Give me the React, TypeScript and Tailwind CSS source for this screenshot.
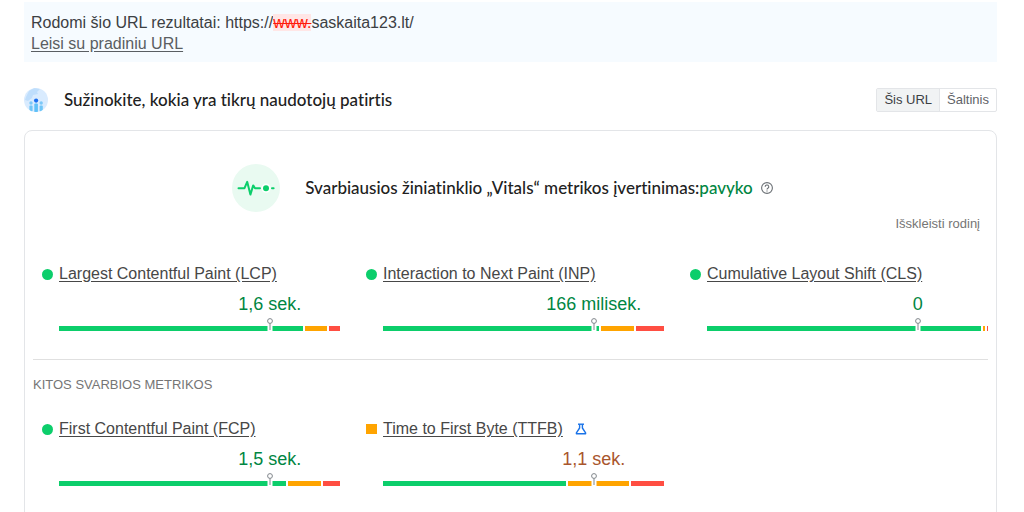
import clsx from "clsx";

type Rating = "good" | "average";

interface Metric {
  name: string;
  value: string;
  rating: Rating;
  // good / needs improvement / poor, in percent
  split: [number, number, number];
  experimental?: boolean;
}

const CORE_METRICS: Metric[] = [
  { name: "Largest Contentful Paint (LCP)", value: "1,6 sek.", rating: "good", split: [88, 8, 4] },
  { name: "Interaction to Next Paint (INP)", value: "166 milisek.", rating: "good", split: [78, 12, 10] },
  { name: "Cumulative Layout Shift (CLS)", value: "0", rating: "good", split: [99, 0.5, 0.5] },
];

const OTHER_METRICS: Metric[] = [
  { name: "First Contentful Paint (FCP)", value: "1,5 sek.", rating: "good", split: [82, 12, 6] },
  {
    name: "Time to First Byte (TTFB)",
    value: "1,1 sek.",
    rating: "average",
    split: [66, 22, 12],
    experimental: true,
  },
];

const SEGMENT_COLORS = ["bg-[#0cce6b]", "bg-[#ffa400]", "bg-[#ff4e42]"];

function UsersIcon() {
  return (
    <svg className="h-6 w-6 shrink-0" viewBox="0 0 24 24" aria-hidden="true">
      <defs>
        <clipPath id="users-clip">
          <circle cx="12" cy="12" r="12" />
        </clipPath>
      </defs>
      <g clipPath="url(#users-clip)">
        <rect width="24" height="24" fill="#d9ebfe" />
        <path d="M2 9 L5 3 L10 0 L16 1 L13 4 L14 6 L9 7 L8 10 L4 13 L1 12 Z" fill="#bfdefc" />
        <circle cx="7" cy="15" r="1.7" fill="#7cc8f8" />
        <rect x="5.4" y="17.6" width="3.2" height="6" rx="1" fill="#6fc6f8" />
        <circle cx="17.2" cy="15" r="1.7" fill="#7cc8f8" />
        <rect x="15.6" y="17.6" width="3.2" height="6" rx="1" fill="#6fc6f8" />
        <rect x="10.3" y="15.6" width="3.6" height="9" rx="1" fill="#5fc0f8" />
        <circle cx="12.1" cy="12.6" r="2.1" fill="#1a6ff0" />
      </g>
    </svg>
  );
}

function PulseIcon() {
  return (
    <svg className="h-12 w-12 shrink-0" viewBox="0 0 48 48" aria-hidden="true">
      <circle cx="24" cy="24" r="24" fill="#e9faf1" />
      <path
        d="M6.5 24.2 H12.5 L15.2 17.8 L18.4 30.6 L21.2 21.4 L23 24.2 H28"
        fill="none"
        stroke="#0cce6b"
        strokeWidth="2"
        strokeLinecap="round"
        strokeLinejoin="round"
      />
      <circle cx="34" cy="24.2" r="4.6" fill="#fff" />
      <circle cx="34" cy="24.2" r="3" fill="#0cce6b" />
      <path d="M40 24.2 H41.6" stroke="#0cce6b" strokeWidth="2" strokeLinecap="round" />
    </svg>
  );
}

function HelpIcon() {
  return (
    <svg className="h-3 w-3" viewBox="0 0 12 12" fill="none" stroke="#6b7075" aria-hidden="true">
      <circle cx="6" cy="6" r="5.4" strokeWidth="1.1" />
      <path d="M4.2 4.9 A1.8 1.7 0 1 1 6.9 6.2 C6.2 6.6 6 6.9 6 7.5" strokeWidth="1.1" />
      <path d="M6 8.4 V9.5" strokeWidth="1.2" />
    </svg>
  );
}

function FlaskIcon() {
  return (
    <svg
      className="h-3 w-3 shrink-0"
      viewBox="0 0 12 12"
      fill="none"
      stroke="#1a73e8"
      strokeWidth="1.4"
      aria-hidden="true"
    >
      <path d="M3 1.2 H9" />
      <path d="M4.6 1.2 V5 L1.4 9.8 V10.8 H10.6 V9.8 L7.4 5 V1.2" strokeLinejoin="round" />
    </svg>
  );
}

function Distribution({ split }: { split: Metric["split"] }) {
  return (
    <div className="relative mt-2.5">
      <div className="flex h-[5px] gap-0.5">
        {split.map((share, i) => (
          <div key={i} className={SEGMENT_COLORS[i]} style={{ flex: `${share} 1 0` }} />
        ))}
      </div>
      {/* 75th percentile marker */}
      <div className="absolute bottom-0 left-3/4 flex h-[5px] w-[5px] -translate-x-1/2 items-end justify-center bg-white">
        <svg className="h-[13px] w-[7px] shrink-0" viewBox="0 0 7 13" fill="none" stroke="#80868b">
          <circle cx="3.5" cy="3" r="2.4" />
          <path d="M3.5 5.4 V12" />
        </svg>
      </div>
    </div>
  );
}

function MetricItem({ metric }: { metric: Metric }) {
  const good = metric.rating === "good";
  return (
    <div>
      <div className="flex h-6 items-center">
        <span
          className={clsx(
            "mr-1.5 shrink-0",
            good ? "h-[11px] w-[11px] rounded-full bg-[#0cce6b]" : "h-2.5 w-[11px] bg-[#ffa400]"
          )}
        />
        <a href="#metric" className="text-base whitespace-nowrap text-[#474747] underline underline-offset-2">
          {metric.name}
        </a>
        {metric.experimental && (
          <span className="ml-3">
            <FlaskIcon />
          </span>
        )}
      </div>
      <div className="pl-[17px]">
        <div
          className={clsx(
            "mt-1.5 pl-[50%] text-center text-lg leading-6 whitespace-nowrap",
            good ? "text-[#018642]" : "text-[#a9562d]"
          )}
        >
          {metric.value}
        </div>
        <Distribution split={metric.split} />
      </div>
    </div>
  );
}

function MetricGrid({ metrics }: { metrics: Metric[] }) {
  return (
    <div className="grid grid-cols-3 gap-[26px] pl-[9px]">
      {metrics.map((m) => (
        <MetricItem key={m.name} metric={m} />
      ))}
    </div>
  );
}

export default function App() {
  return (
    <main className="min-h-screen overflow-hidden bg-white pt-0.5 pr-[27px] pl-6 font-['Liberation_Sans',Arial,sans-serif]">
      <div className="bg-[#f6fbff] px-[7px] pt-2.5 pb-2 text-base leading-[21px] text-[#3c4043]">
        <p>
          Rodomi šio URL rezultatai: https://
          <del className="bg-[#ffe6e6] text-[#ff1a0a] line-through">www.</del>
          saskaita123.lt/
        </p>
        <a href="#original" className="text-[#5a5e62] underline underline-offset-2">
          Leisi su pradiniu URL
        </a>
      </div>

      <header className="mt-[26px] flex items-center">
        <UsersIcon />
        <h2 className="ml-4 font-[Lato,sans-serif] text-[17px] leading-6 font-medium text-[#212121] [font-variant-ligatures:none]">
          Sužinokite, kokia yra tikrų naudotojų patirtis
        </h2>
        <div className="ml-auto flex h-6 rounded-xs border border-[#e3e5e8] text-[13px]">
          <button className="border-r border-[#e3e5e8] bg-[#f1f3f4] px-[7px] text-[#3c4043]">Šis URL</button>
          <button className="px-[7px] text-[#5f6368]">Šaltinis</button>
        </div>
      </header>

      <section className="mt-[18px] rounded-lg border border-[#e3e5e8] px-2 pt-[33px] pb-12">
        <div className="flex items-center justify-center pr-4">
          <PulseIcon />
          <h3 className="ml-[25px] font-[Lato,sans-serif] text-[17px] leading-6 font-medium text-[#212121] [font-variant-ligatures:none]">
            Svarbiausios žiniatinklio „Vitals“ metrikos įvertinimas:
            <span className="text-[#018642]">pavyko</span>
          </h3>
          <button aria-label="?" className="ml-2">
            <HelpIcon />
          </button>
        </div>
        <div className="flex justify-end pt-0.5 pr-2">
          <button className="text-[13px] leading-5 text-[#757575]">Išskleisti rodinį</button>
        </div>

        <div className="mt-7">
          <MetricGrid metrics={CORE_METRICS} />
        </div>
        <hr className="mt-7 border-[#e0e0e0]" />
        <h4 className="mt-[15px] text-[13px] leading-5 text-[#757575]">KITOS SVARBIOS METRIKOS</h4>
        <div className="mt-[22px]">
          <MetricGrid metrics={OTHER_METRICS} />
        </div>
      </section>
    </main>
  );
}
